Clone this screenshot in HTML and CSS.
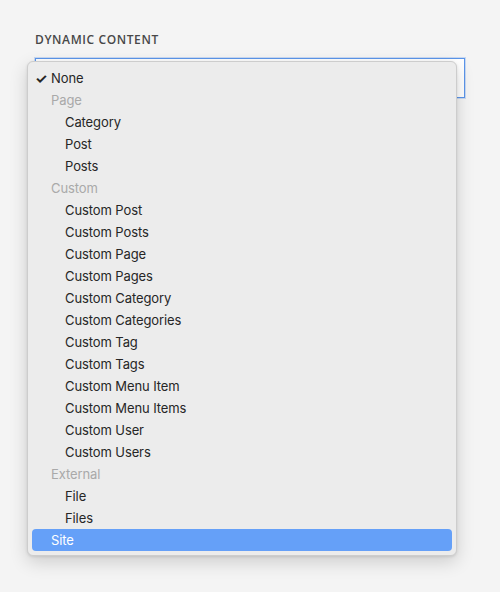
FILE: index.html
```html
<!DOCTYPE html>
<html>
<head>
<meta charset="utf-8">
<link rel="stylesheet" href="styles.css">
</head>
<body>
<div class="page">
  <div class="field">
    <div class="label">DYNAMIC CONTENT</div>
    <div class="select"></div>
    <ul class="menu">
      <li class="item top"><span class="check">✓</span>None</li>
      <li class="item group">Page</li>
      <li class="item sub">Category</li>
      <li class="item sub">Post</li>
      <li class="item sub">Posts</li>
      <li class="item group">Custom</li>
      <li class="item sub">Custom Post</li>
      <li class="item sub">Custom Posts</li>
      <li class="item sub">Custom Page</li>
      <li class="item sub">Custom Pages</li>
      <li class="item sub">Custom Category</li>
      <li class="item sub">Custom Categories</li>
      <li class="item sub">Custom Tag</li>
      <li class="item sub">Custom Tags</li>
      <li class="item sub">Custom Menu Item</li>
      <li class="item sub">Custom Menu Items</li>
      <li class="item sub">Custom User</li>
      <li class="item sub">Custom Users</li>
      <li class="item group">External</li>
      <li class="item sub">File</li>
      <li class="item sub">Files</li>
      <li class="item top active">Site</li>
    </ul>
  </div>
</div>
</body>
</html>
```
FILE: styles.css
```css
html, body {
  margin: 0;
  padding: 0;
  background: #f4f4f4;
  height: 100%;
}
.page {
  padding: 32px 36px 0 35px;
}
.field {
  position: relative;
  width: 430px;
}
.label {
  font-family: "Open Sans", sans-serif;
  font-weight: 600;
  font-size: 12px;
  letter-spacing: 0.6px;
  color: #484848;
  line-height: 16px;
  margin-bottom: 10px;
}
.select {
  height: 38px;
  border: 1px solid #5b95ea;
  box-shadow: 0 0 0 1px rgba(120, 165, 235, 0.35);
  background: #ffffff;
}
.menu {
  position: absolute;
  left: -8px;
  top: 29px;
  width: 430px;
  margin: 0;
  padding: 5px 4px 4px 4px;
  list-style: none;
  background: #ececec;
  border: 1px solid #cdcdcd;
  border-radius: 6px;
  box-shadow: 0 6px 18px rgba(0, 0, 0, 0.16), 0 1px 3px rgba(0, 0, 0, 0.1);
  font-family: Inter, "Noto Sans", sans-serif;
  font-size: 13px;
  letter-spacing: -0.1px;
  color: #262626;
  box-sizing: border-box;
}
.item {
  height: 22px;
  line-height: 23px;
  border-radius: 4px;
  position: relative;
  white-space: nowrap;
}
.top, .group {
  padding-left: 19px;
}
.sub {
  padding-left: 33px;
}
.group {
  color: #a9a9a9;
}
.check {
  position: absolute;
  left: 3px;
  top: 0;
  font-size: 14px;
  font-weight: 700;
}
.active {
  background: #65a0f8;
  color: #ffffff;
}
```
